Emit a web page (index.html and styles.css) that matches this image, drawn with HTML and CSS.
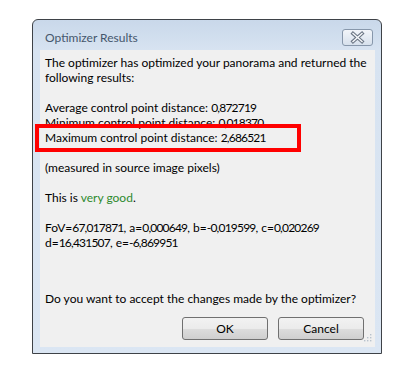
FILE: index.html
```html
<!DOCTYPE html>
<html>
<head>
<meta charset="utf-8">
<link rel="stylesheet" href="styles.css">
</head>
<body>
<div class="window">
  <div class="titlebar">
    <span class="title">Optimizer Results</span>
    <button class="close" aria-label="Close">
      <svg width="31" height="17" viewBox="0 0 31 17">
        <defs>
          <linearGradient id="cg" x1="0" y1="0" x2="0" y2="1">
            <stop offset="0" stop-color="#f3f6fa"/>
            <stop offset="1" stop-color="#d6e0ec"/>
          </linearGradient>
        </defs>
        <rect x="0.5" y="0.5" width="30" height="16" rx="2.5" fill="url(#cg)" stroke="#8797ab"/>
        <path d="M11 4.5 L20 12.5 M20 4.5 L11 12.5" stroke="#6b7685" stroke-width="3.6" stroke-linecap="square"/>
        <path d="M11 4.5 L20 12.5 M20 4.5 L11 12.5" stroke="#f8fafc" stroke-width="1.4" stroke-linecap="square"/>
      </svg>
    </button>
  </div>
  <div class="client">
    <div class="message">
      <p>The optimizer has optimized your panorama and returned the<br>following results:</p>
      <p>Average control point distance: <span class="num">0,872719</span><br>Minimum control point distance: <span class="num">0,018370</span><br>Maximum control point distance: <span class="num">2,686521</span></p>
      <p>(measured in source image pixels)</p>
      <p>This is <span class="good">very good</span>.</p>
      <p>FoV=<span class="num">67,017871</span>, a=<span class="num">0,000649</span>, b=<span class="num">-0,019599</span>, c=<span class="num">0,020269</span><br>d=<span class="num">16,431507</span>, e=<span class="num">-6,869951</span></p>
    </div>
    <p class="question">Do you want to accept the changes made by the optimizer?</p>
    <div class="buttons">
      <button class="btn">OK</button>
      <button class="btn">Cancel</button>
    </div>
    <svg class="grip" width="8" height="8" viewBox="0 0 8 8">
      <g fill="#b8c2cc">
        <rect x="6" y="0" width="1.4" height="1.4"/>
        <rect x="3" y="3" width="1.4" height="1.4"/>
        <rect x="6" y="3" width="1.4" height="1.4"/>
        <rect x="0" y="6" width="1.4" height="1.4"/>
        <rect x="3" y="6" width="1.4" height="1.4"/>
        <rect x="6" y="6" width="1.4" height="1.4"/>
      </g>
    </svg>
  </div>
  <div class="highlight"></div>
</div>
</body>
</html>
```

FILE: styles.css
```css
html, body {
  margin: 0;
  padding: 0;
  background: #ffffff;
}

body {
  font-family: "Lato", "Open Sans", sans-serif;
  font-size: 12px;
  color: #000;
}

.window {
  position: relative;
  box-sizing: border-box;
  margin: 19px 0 0 32px;
  width: 350px;
  height: 335px;
  border: 1px solid #3e4247;
  border-radius: 6px 6px 0 0;
  background: linear-gradient(to bottom, #c9d8ea 0px, #d7e3f1 30px, #dbe6f3 100%);
  padding: 0 6px 6px 7px;
  display: flex;
  flex-direction: column;
}

.titlebar {
  height: 30px;
  display: flex;
  align-items: flex-start;
  justify-content: space-between;
}

.title {
  margin: 10px 0 0 5px;
  font-size: 12px;
  color: #45566c;
  line-height: 16px;
}

.close {
  margin: 9px 2px 0 0;
  padding: 0;
  border: 0;
  background: none;
  width: 31px;
  height: 17px;
  display: block;
}

.close svg {
  display: block;
}

.client {
  position: relative;
  flex: 1;
  background: #f0f0f0;
  padding: 5px 11px 7px 5px;
  display: flex;
  flex-direction: column;
  line-height: 15px;
  white-space: nowrap;
}

.message p {
  margin: 0 0 15px 0;
}

.message p:last-child {
  margin: 0;
}

.num {
  letter-spacing: -0.8px;
}

.good {
  color: #2e8a2e;
}

.question {
  margin: auto 0 0 0;
}

.buttons {
  display: flex;
  justify-content: flex-end;
  gap: 10px;
  margin-top: 11px;
}

.btn {
  box-sizing: border-box;
  width: 86px;
  height: 23px;
  border: 1px solid #707070;
  border-radius: 3px;
  background: linear-gradient(to bottom, #f2f2f2 0%, #ebebeb 50%, #dddddd 51%, #cfcfcf 100%);
  font-family: inherit;
  font-size: 12px;
  color: #000;
  padding: 0;
}

.grip {
  position: absolute;
  right: 3px;
  bottom: 5px;
}

.highlight {
  position: absolute;
  left: 2px;
  top: 104px;
  width: 266px;
  height: 28px;
  box-sizing: border-box;
  border: 4px solid #ff0000;
}
```
